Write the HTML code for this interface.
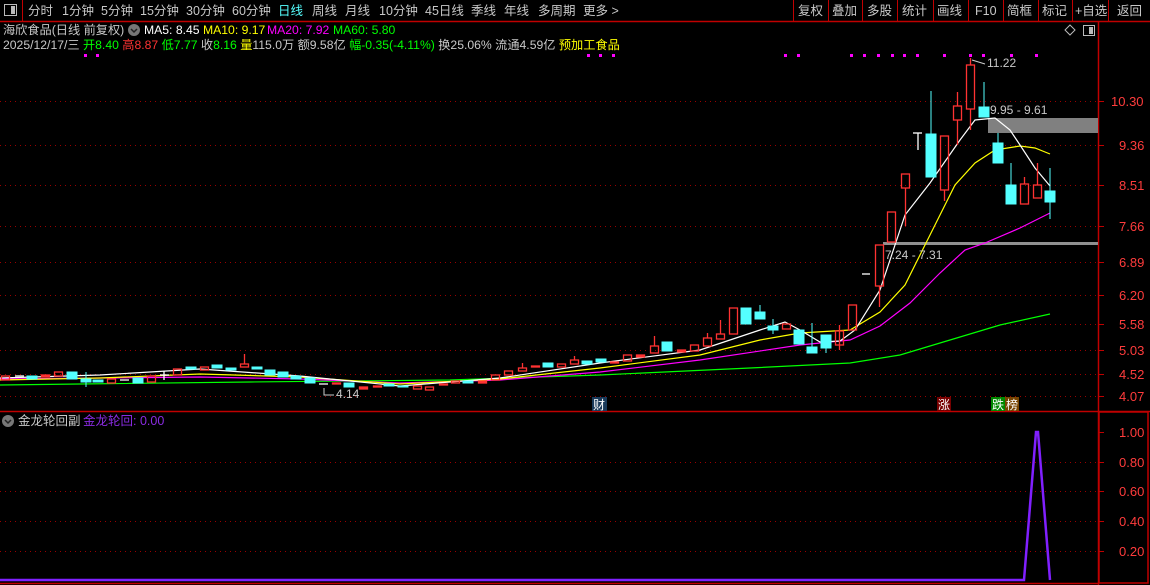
<!DOCTYPE html>
<html><head><meta charset="utf-8"><style>
html,body{margin:0;padding:0;background:#000;width:1150px;height:585px;overflow:hidden}
body{position:relative;font-family:"Liberation Sans","Noto Sans CJK SC",sans-serif;font-size:12px;color:#c8c8c8}
</style></head><body>
<svg width="1150" height="585" style="position:absolute;left:0;top:0" xmlns="http://www.w3.org/2000/svg" font-family="Liberation Sans, Noto Sans CJK SC, sans-serif">
<line x1="0" y1="21.5" x2="1150" y2="21.5" stroke="#c00000" stroke-width="1.5"/>
<line x1="22.5" y1="0" x2="22.5" y2="21" stroke="#c00000"/>
<rect x="4.5" y="4.5" width="12" height="11" fill="none" stroke="#bbb"/><rect x="11" y="6" width="4" height="8" fill="#bbb"/>
<g stroke="#c00000">
<line x1="793.5" y1="0" x2="793.5" y2="21"/><line x1="828.5" y1="0" x2="828.5" y2="21"/><line x1="862.5" y1="0" x2="862.5" y2="21"/><line x1="897.5" y1="0" x2="897.5" y2="21"/><line x1="933.5" y1="0" x2="933.5" y2="21"/><line x1="968.5" y1="0" x2="968.5" y2="21"/><line x1="1003.5" y1="0" x2="1003.5" y2="21"/><line x1="1038.5" y1="0" x2="1038.5" y2="21"/><line x1="1072.5" y1="0" x2="1072.5" y2="21"/><line x1="1108.5" y1="0" x2="1108.5" y2="21"/>
</g>
<g font-size="12.5" fill="#c8c8c8">
<text x="28" y="15">分时</text><text x="62" y="15">1分钟</text><text x="101" y="15">5分钟</text><text x="140" y="15">15分钟</text><text x="186" y="15">30分钟</text><text x="232" y="15">60分钟</text><text x="278" y="15" fill="#5ff">日线</text><text x="312" y="15">周线</text><text x="345" y="15">月线</text><text x="379" y="15">10分钟</text><text x="425" y="15">45日线</text><text x="471" y="15">季线</text><text x="504" y="15">年线</text><text x="538" y="15">多周期</text><text x="583" y="15">更多 &gt;</text>
<text x="798" y="15">复权</text><text x="832" y="15">叠加</text><text x="867" y="15">多股</text><text x="902" y="15">统计</text><text x="937" y="15">画线</text><text x="975" y="15">F10</text><text x="1007" y="15">简框</text><text x="1042" y="15">标记</text><text x="1075" y="15">+自选</text><text x="1117" y="15">返回</text>
</g>
<g font-size="12.2">
<text x="3" y="34" fill="#c8c8c8">海欣食品(日线 前复权)</text>
<circle cx="134" cy="30" r="6" fill="#777"/><path d="M131 29 L134 32 L137 29" stroke="#222" fill="none" stroke-width="1.5"/>
<text x="144" y="34" fill="#fff">MA5: 8.45</text><text x="203" y="34" fill="#ff0">MA10: 9.17</text><text x="267" y="34" fill="#f0f">MA20: 7.92</text><text x="333" y="34" fill="#0f0">MA60: 5.80</text>
<text x="3" y="49" fill="#c8c8c8">2025/12/17/三 <tspan fill="#0f0">开8.40</tspan> <tspan fill="#f33">高8.87</tspan> <tspan fill="#0f0">低7.77</tspan> 收<tspan fill="#0f0">8.16</tspan> <tspan fill="#ff0">量</tspan>115.0万 额9.58亿 <tspan fill="#0f0">幅-0.35(-4.11%)</tspan> 换25.06% 流通4.59亿 <tspan fill="#ff0">预加工食品</tspan></text>
</g>
<g fill="#f0f">
<rect x="84" y="54" width="3" height="3"/><rect x="96" y="54" width="3" height="3"/><rect x="587" y="54" width="3" height="3"/><rect x="599" y="54" width="3" height="3"/><rect x="612" y="54" width="3" height="3"/>
<rect x="784" y="54" width="3" height="3"/><rect x="797" y="54" width="3" height="3"/><rect x="850" y="54" width="3" height="3"/><rect x="863" y="54" width="3" height="3"/><rect x="877" y="54" width="3" height="3"/><rect x="891" y="54" width="3" height="3"/><rect x="903" y="54" width="3" height="3"/><rect x="916" y="54" width="3" height="3"/><rect x="943" y="54" width="3" height="3"/><rect x="969" y="54" width="3" height="3"/><rect x="982" y="54" width="3" height="3"/><rect x="1010" y="54" width="3" height="3"/><rect x="1035" y="54" width="3" height="3"/>
</g>
<path d="M1070 25 L1075 30 L1070 35 L1065 30 Z" fill="none" stroke="#bbb"/>
<rect x="1083.5" y="25.5" width="11" height="10" fill="none" stroke="#bbb"/><rect x="1089" y="27" width="4" height="7" fill="#bbb"/>
<g stroke="#900" stroke-dasharray="1,4">
<line x1="0" y1="101.5" x2="1098" y2="101.5"/><line x1="0" y1="145.5" x2="1098" y2="145.5"/><line x1="0" y1="185.5" x2="1098" y2="185.5"/><line x1="0" y1="226.5" x2="1098" y2="226.5"/><line x1="0" y1="262.5" x2="1098" y2="262.5"/><line x1="0" y1="295.5" x2="1098" y2="295.5"/><line x1="0" y1="324.5" x2="1098" y2="324.5"/><line x1="0" y1="350.5" x2="1098" y2="350.5"/><line x1="0" y1="374.5" x2="1098" y2="374.5"/><line x1="0" y1="396.5" x2="1098" y2="396.5"/>
<line x1="0" y1="462.5" x2="1098" y2="462.5"/><line x1="0" y1="491.5" x2="1098" y2="491.5"/><line x1="0" y1="521.5" x2="1098" y2="521.5"/><line x1="0" y1="551.5" x2="1098" y2="551.5"/>
</g>
<g stroke="#c00000" stroke-width="1.5" fill="none">
<line x1="1098.5" y1="22" x2="1098.5" y2="585"/>
<line x1="0" y1="411.5" x2="1150" y2="411.5"/>
<rect x="1099" y="412" width="49" height="171"/>
<line x1="0" y1="583.5" x2="1098" y2="583.5"/>
</g>
<g stroke="#c00000">
<line x1="1098" y1="101.5" x2="1104" y2="101.5"/><line x1="1098" y1="145.5" x2="1104" y2="145.5"/><line x1="1098" y1="185.5" x2="1104" y2="185.5"/><line x1="1098" y1="226.5" x2="1104" y2="226.5"/><line x1="1098" y1="262.5" x2="1104" y2="262.5"/><line x1="1098" y1="295.5" x2="1104" y2="295.5"/><line x1="1098" y1="324.5" x2="1104" y2="324.5"/><line x1="1098" y1="350.5" x2="1104" y2="350.5"/><line x1="1098" y1="374.5" x2="1104" y2="374.5"/><line x1="1098" y1="396.5" x2="1104" y2="396.5"/>
<line x1="1099" y1="432.5" x2="1104" y2="432.5"/><line x1="1099" y1="462.5" x2="1104" y2="462.5"/><line x1="1099" y1="491.5" x2="1104" y2="491.5"/><line x1="1099" y1="521.5" x2="1104" y2="521.5"/><line x1="1099" y1="551.5" x2="1104" y2="551.5"/>
</g>
<g fill="#ff3c3c" font-size="13">
<text x="1111" y="106">10.30</text><text x="1119" y="150">9.36</text><text x="1119" y="190">8.51</text><text x="1119" y="231">7.66</text><text x="1119" y="267">6.89</text><text x="1119" y="300">6.20</text><text x="1119" y="329">5.58</text><text x="1119" y="355">5.03</text><text x="1119" y="379">4.52</text><text x="1119" y="401">4.07</text>
<text x="1119" y="437">1.00</text><text x="1119" y="467">0.80</text><text x="1119" y="496">0.60</text><text x="1119" y="526">0.40</text><text x="1119" y="556">0.20</text>
</g>
<rect x="988" y="118" width="110" height="15" fill="#808080"/>
<rect x="883" y="242" width="215" height="3" fill="#909090"/>
<g fill="none" stroke-width="1.2">
<polyline stroke="#0f0" points="0,385 80,384 250,382 450,380 600,375 750,368 850,363 900,355 950,340 1000,325 1050,314"/>
<polyline stroke="#f0f" points="0,379 200,377 300,379 400,383 500,380 600,372 700,360 800,345 850,340 880,326 910,303 940,273 965,250 985,243 1020,228 1050,213"/>
<polyline stroke="#ff0" points="0,380 100,378 200,374 300,377 400,384 500,379 600,368 700,355 760,340 800,333 850,330 880,312 905,285 930,235 955,185 975,163 995,150 1020,146 1035,148 1050,154"/>
<polyline stroke="#fff" points="0,378 100,375 200,369 300,376 400,386 500,378 600,363 700,350 760,330 785,322 800,330 820,342 840,341 855,330 880,290 905,215 930,183 960,140 975,120 995,118 1010,130 1020,145 1035,168 1050,186"/>
</g>
<g stroke="#54ffff" fill="#54ffff">
<rect x="27" y="376" width="10" height="3"/><rect x="67" y="372" width="10" height="7"/><rect x="81" y="379" width="10" height="3"/><line x1="86" y1="372" x2="86" y2="387"/><rect x="93" y="380" width="10" height="2"/><rect x="133" y="378" width="10" height="5"/><rect x="186" y="367" width="10" height="2"/><rect x="212" y="365" width="10" height="3"/><rect x="226" y="368" width="10" height="2"/><rect x="252" y="367" width="10" height="2"/><rect x="265" y="370" width="10" height="5"/><rect x="278" y="372" width="10" height="5"/><rect x="291" y="376" width="10" height="3"/><rect x="305" y="378" width="10" height="5"/><rect x="344" y="383" width="10" height="4"/><rect x="384" y="384" width="10" height="2"/><rect x="398" y="386" width="10" height="1"/><rect x="463" y="381" width="10" height="2"/><rect x="543" y="363" width="10" height="4"/><rect x="582" y="361" width="10" height="3"/><rect x="596" y="359" width="10" height="3"/>
<rect x="662" y="342" width="10" height="9"/><rect x="741" y="308" width="10" height="16"/><rect x="755" y="312" width="10" height="7"/><line x1="760" y1="305" x2="760" y2="312"/><rect x="768" y="326" width="10" height="4"/><line x1="773" y1="319" x2="773" y2="334"/><rect x="794" y="330" width="10" height="14"/><rect x="807" y="347" width="10" height="6"/><line x1="812" y1="323" x2="812" y2="347"/><rect x="821" y="335" width="10" height="13"/><line x1="826" y1="348" x2="826" y2="353"/>
<rect x="926" y="134" width="10" height="43"/><line x1="931" y1="91" x2="931" y2="134"/><rect x="979" y="107" width="10" height="10"/><line x1="984" y1="82" x2="984" y2="107"/><rect x="993" y="143" width="10" height="20"/><line x1="998" y1="133" x2="998" y2="143"/><rect x="1006" y="185" width="10" height="19"/><line x1="1011" y1="163" x2="1011" y2="185"/><rect x="1045" y="191" width="10" height="11"/><line x1="1050" y1="168" x2="1050" y2="219"/>
</g>
<g stroke="#ff3232" fill="none" stroke-width="1.3">
<rect x="1.5" y="376" width="8" height="4"/><rect x="41.5" y="375" width="8" height="2" fill="#ff3232"/><rect x="54.5" y="372" width="8" height="4"/><rect x="107.5" y="379" width="8" height="4"/><rect x="147.5" y="376" width="8" height="6"/><rect x="173.5" y="369" width="8" height="6"/><rect x="200.5" y="367" width="8" height="3"/><rect x="240.5" y="364" width="8" height="3"/><line x1="244.5" y1="354" x2="244.5" y2="364"/><rect x="332.5" y="383" width="8" height="1" fill="#ff3232"/><rect x="359.5" y="387" width="8" height="2" fill="#ff3232"/><rect x="373.5" y="386" width="8" height="1" fill="#ff3232"/><rect x="413.5" y="386" width="8" height="3"/><rect x="425.5" y="387" width="8" height="3"/><rect x="439.5" y="384" width="8" height="1"/><rect x="451.5" y="381" width="8" height="2"/><rect x="478.5" y="381" width="8" height="2" fill="#ff3232"/><rect x="491.5" y="375" width="8" height="5"/><rect x="504.5" y="371" width="8" height="4"/><rect x="518.5" y="368" width="8" height="3"/><line x1="522.5" y1="363" x2="522.5" y2="368"/><rect x="531.5" y="366" width="8" height="1" fill="#ff3232"/><rect x="557.5" y="364" width="8" height="3"/><rect x="570.5" y="360" width="8" height="4"/><line x1="574.5" y1="356" x2="574.5" y2="360"/>
<rect x="610.5" y="362" width="8" height="1" fill="#ff3232"/><rect x="623.5" y="355" width="8" height="6"/><rect x="636.5" y="355" width="8" height="2" fill="#ff3232"/><rect x="650.5" y="346" width="8" height="7"/><line x1="654.5" y1="336" x2="654.5" y2="346"/><rect x="677.5" y="350" width="8" height="2" fill="#ff3232"/><rect x="690.5" y="345" width="8" height="6"/><rect x="703.5" y="338" width="8" height="8"/><line x1="707.5" y1="333" x2="707.5" y2="338"/><rect x="716.5" y="334" width="8" height="5"/><line x1="720.5" y1="320" x2="720.5" y2="334"/><rect x="729.5" y="308" width="8" height="26"/><rect x="782.5" y="324" width="8" height="5"/><rect x="835.5" y="331" width="8" height="14"/><line x1="839.5" y1="325" x2="839.5" y2="350"/><rect x="848.5" y="305" width="8" height="25"/>
<rect x="875.5" y="245" width="8" height="41"/><line x1="879.5" y1="286" x2="879.5" y2="307"/><rect x="887.5" y="212" width="8" height="30"/><rect x="901.5" y="174" width="8" height="14"/><line x1="905.5" y1="188" x2="905.5" y2="226"/><rect x="940.5" y="136" width="8" height="54"/><line x1="944.5" y1="190" x2="944.5" y2="201"/><rect x="953.5" y="106" width="8" height="14"/><line x1="957.5" y1="92" x2="957.5" y2="106"/><line x1="957.5" y1="120" x2="957.5" y2="145"/><rect x="966.5" y="65" width="8" height="44"/><line x1="970.5" y1="58" x2="970.5" y2="65"/><line x1="970.5" y1="109" x2="970.5" y2="130"/><rect x="1020.5" y="184" width="8" height="20"/><line x1="1024.5" y1="177" x2="1024.5" y2="184"/><rect x="1033.5" y="185" width="8" height="13"/><line x1="1037.5" y1="163" x2="1037.5" y2="185"/>
</g>
<g stroke="#fff" stroke-width="1.3">
<line x1="15" y1="376" x2="24" y2="376"/><line x1="120" y1="380" x2="129" y2="380"/><line x1="160" y1="375" x2="169" y2="375"/><line x1="164" y1="371" x2="164" y2="380"/><line x1="319" y1="384" x2="328" y2="384"/><line x1="862" y1="274" x2="870" y2="274"/><line x1="913" y1="133" x2="922" y2="133"/><line x1="918" y1="133" x2="918" y2="150"/>
</g>
<g fill="#c8c8c8" font-size="12">
<text x="987" y="67">11.22</text><path d="M972 60 L985 64" stroke="#ccc"/>
<text x="990" y="114">9.95 - 9.61</text>
<text x="885" y="259">7.24 - 7.31</text>
<text x="336" y="398">4.14</text><path d="M324 388 L324 395 L334 395" stroke="#ccc" fill="none"/>
</g>
<rect x="592" y="397" width="15" height="14" fill="#1a3a5a"/><text x="593" y="409" fill="#fff" font-size="12">财</text>
<rect x="937" y="397" width="14" height="14" fill="#700"/><text x="938" y="409" fill="#fff" font-size="12">涨</text>
<rect x="991" y="397" width="14" height="14" fill="#080"/><text x="992" y="409" fill="#fff" font-size="12">跌</text>
<rect x="1005" y="397" width="14" height="14" fill="#740"/><text x="1006" y="409" fill="#fff" font-size="12">榜</text>
<circle cx="8" cy="421" r="6" fill="#777"/><path d="M5 420 L8 423 L11 420" stroke="#222" fill="none" stroke-width="1.5"/>
<text x="18" y="425" fill="#c8c8c8" font-size="12.5">金龙轮回副</text>
<text x="83" y="425" fill="#8a2be2" font-size="12.5">金龙轮回: 0.00</text>
<polyline fill="none" stroke="#8020ff" stroke-width="2.5" points="0,580 1024,580 1036,432 1038,432 1050,580"/>
</svg>
</body></html>
